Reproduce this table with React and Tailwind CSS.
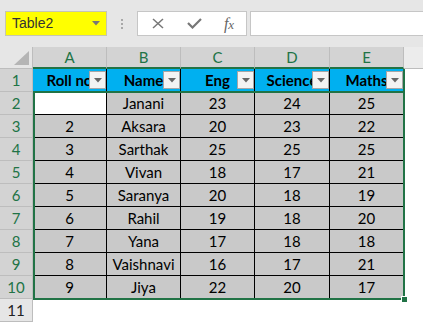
import React from "react";

const rows = [
  ["", "Janani", 23, 24, 25],
  [2, "Aksara", 20, 23, 22],
  [3, "Sarthak", 25, 25, 25],
  [4, "Vivan", 18, 17, 21],
  [5, "Saranya", 20, 18, 19],
  [6, "Rahil", 19, 18, 20],
  [7, "Yana", 17, 18, 18],
  [8, "Vaishnavi", 16, 17, 21],
  [9, "Jiya", 22, 20, 17],
];

const heads = ["Roll no", "Name", "Eng", "Science", "Maths"];
const letters = ["A", "B", "C", "D", "E"];

function DropBtn() {
  return (
    <div className="absolute right-0 top-[2px] w-[17px] h-[18px] bg-[#f3f3f3] border border-[#a6a6a6] flex items-center justify-center">
      <svg width="8" height="5" viewBox="0 0 8 5">
        <polygon points="0,0 8,0 4,4.5" fill="#666" />
      </svg>
    </div>
  );
}

export default function App() {
  return (
    <div
      className="w-[423px] h-[323px] overflow-hidden bg-white"
      style={{ fontFamily: "Lato, 'Liberation Sans', sans-serif" }}
    >
      {/* top bar */}
      <div className="h-[47px] bg-[#e6e6e6] flex items-start pt-[11px] pl-[5px]">
        <div className="w-[102px] h-[25px] bg-[#ffff00] border border-[#c6c6b0] flex items-center justify-between pl-[6px] pr-[6px]">
          <span
            className="text-[14px] text-[#333]"
            style={{ fontFamily: "'Liberation Sans', Arial, sans-serif" }}
          >
            Table2
          </span>
          <svg width="8" height="5" viewBox="0 0 8 5">
            <polygon points="0,0 8,0 4,4.5" fill="#777" />
          </svg>
        </div>
        <div className="w-[30px] h-[25px] flex flex-col items-center justify-center gap-[2px]">
          <div className="w-[2px] h-[2px] bg-[#a8a8a8]" />
          <div className="w-[2px] h-[2px] bg-[#a8a8a8]" />
          <div className="w-[2px] h-[2px] bg-[#a8a8a8]" />
        </div>
        <div className="w-[110px] h-[25px] bg-white border border-[#c6c6c6] flex items-center">
          <div className="w-[38px] flex justify-center pl-[2px]">
            <svg width="12" height="11" viewBox="0 0 12 11">
              <line x1="1" y1="1" x2="11" y2="10" stroke="#777" strokeWidth="1.5" />
              <line x1="11" y1="1" x2="1" y2="10" stroke="#777" strokeWidth="1.5" />
            </svg>
          </div>
          <div className="w-[36px] flex justify-center">
            <svg width="15" height="11" viewBox="0 0 15 11">
              <polyline points="1,5 5.5,9.5 14,1" fill="none" stroke="#777" strokeWidth="2.2" />
            </svg>
          </div>
          <div className="w-[34px] flex justify-center">
            <span
              className="text-[16px] italic text-[#666] leading-none"
              style={{ fontFamily: "'Liberation Serif', 'DejaVu Serif', serif" }}
            >
              f<span className="text-[13px]">x</span>
            </span>
          </div>
        </div>
        <div className="flex-1 ml-[3px] h-[25px] bg-white border border-[#c6c6c6] border-r-0" />
      </div>

      {/* grid */}
      <div className="relative grid grid-cols-[33px_74px_74px_74px_75px_74px_1fr] grid-rows-[22px_repeat(11,23px)] text-[15px]">
        {/* column header row */}
        <div className="bg-[#e6e6e6] border-r border-b border-[#bdbdbd] relative">
          <svg className="absolute right-[3px] bottom-[3px]" width="15" height="14" viewBox="0 0 15 14">
            <polygon points="15,0 15,14 0,14" fill="#b5b5b5" />
          </svg>
        </div>
        {letters.map((l) => (
          <div
            key={l}
            className="bg-[#d3d3d3] border-r border-[#bdbdbd] border-b-2 border-b-[#217346] flex items-center justify-center text-[#217346]"
          >
            {l}
          </div>
        ))}
        <div className="bg-[#ececec] border-b border-[#bdbdbd]" />

        {/* row 1 */}
        <div className="bg-[#d3d3d3] border-r border-b border-[#bdbdbd] flex items-center justify-center text-[#217346]">
          1
        </div>
        {heads.map((h) => (
          <div
            key={h}
            className="relative bg-[#00b0f0] border-r border-b border-black flex items-center justify-center overflow-hidden font-bold text-black whitespace-nowrap"
          >
            {h}
            <DropBtn />
          </div>
        ))}
        <div className="bg-white" />

        {/* data rows */}
        {rows.map((r, i) => (
          <React.Fragment key={i}>
            <div className="bg-[#d3d3d3] border-r border-b border-[#bdbdbd] flex items-center justify-center text-[#217346]">
              {i + 2}
            </div>
            {r.map((c, j) => (
              <div
                key={j}
                className={`${i === 0 && j === 0 ? "bg-white" : "bg-[#c9c9c9]"} border-r border-b border-black flex items-center justify-center text-black whitespace-nowrap`}
              >
                {c}
              </div>
            ))}
            <div className="bg-white" />
          </React.Fragment>
        ))}

        {/* row 11 */}
        <div className="bg-[#e6e6e6] border-r border-b border-[#bdbdbd] flex items-center justify-center text-[#222]">
          11
        </div>
        <div className="col-span-6 bg-white" />

        {/* selection overlays */}
        <div className="absolute left-[33px] top-[44px] w-[372px] h-[209px] border-2 border-[#217346] pointer-events-none" />
        <div className="absolute left-[403px] top-[22px] w-[2px] h-[23px] bg-[#217346]" />
        <div className="absolute left-[401px] top-[249px] w-[7px] h-[7px] bg-[#217346] border border-white" />
      </div>
    </div>
  );
}
